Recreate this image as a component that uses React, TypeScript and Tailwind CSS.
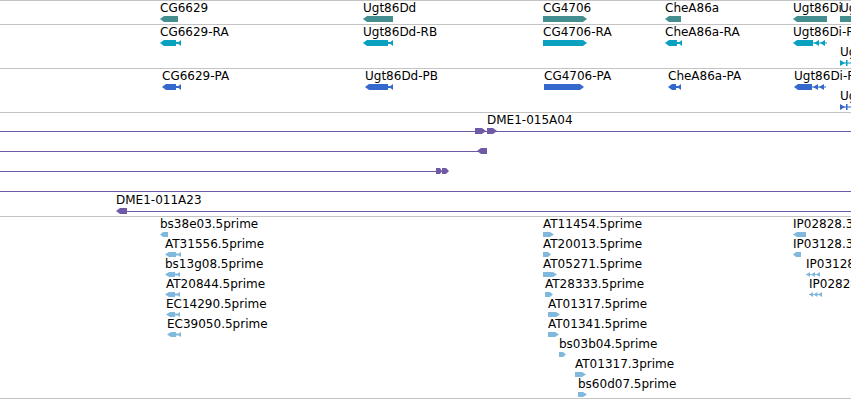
import React from "react";

type Shape = "L" | "R" | "fish" | "chev2" | "rbar" | "rect" | "chevLine" | "chev3";

type G = { x: number; w: number; s: Shape; row?: number };
type Lb = { x: number; t: string; row?: number };

const TEAL = "#438f8f";
const CYAN = "#0aa0c0";
const BLUE = "#3468cc";
const EST = "#80b8de";
const PURPLE = "#6e5aa5";

function tri(xApex: number, xBase: number, h: number) {
  return `${xApex},${h / 2} ${xBase},0 ${xBase},${h}`;
}

function Glyph({ g, color, h }: { g: G; color: string; h: number }) {
  const { w, s } = g;
  const row = g.row ?? 0;
  const a = Math.min(4, Math.round(w * 0.4));
  let body: React.ReactNode = null;
  if (s === "L") {
    body = <polygon points={`0,${h / 2} ${a},0 ${w},0 ${w},${h} ${a},${h}`} />;
  } else if (s === "R") {
    body = <polygon points={`0,0 ${w - a},0 ${w},${h / 2} ${w - a},${h} 0,${h}`} />;
  } else if (s === "rect") {
    body = <rect x={0} y={0} width={w} height={h} />;
  } else if (s === "fish") {
    const bw = w - 5;
    body = (
      <>
        <polygon points={`0,${h / 2} ${a},0 ${bw},0 ${bw},${h} ${a},${h}`} />
        <rect x={bw} y={h / 2 - 1} width={2} height={2} />
        <polygon points={tri(bw + 1, w, h)} />
      </>
    );
  } else if (s === "chev2") {
    const bw = w - 14;
    body = (
      <>
        <polygon points={`0,${h / 2} ${a},0 ${bw},0 ${bw},${h} ${a},${h}`} />
        <rect x={bw} y={h / 2 - 0.5} width={w - bw} height={1} />
        <polygon points={tri(bw + 1, bw + 6, h)} />
        <polygon points={tri(bw + 7, bw + 12, h)} />
      </>
    );
  } else if (s === "rbar") {
    body = (
      <>
        <rect x={0} y={h / 2 - 0.5} width={w} height={1} />
        <polygon points={`0,0 5,${h / 2} 0,${h}`} />
        <rect x={6} y={0} width={1.5} height={h} />
      </>
    );
  } else if (s === "chevLine") {
    body = (
      <>
        <rect x={0} y={h / 2 - 0.5} width={w} height={1} />
        <polygon points={tri(0, 4, h)} />
        <polygon points={tri(w - 9, w - 5, h)} />
        <polygon points={tri(w - 4, w, h)} />
      </>
    );
  } else if (s === "chev3") {
    body = (
      <>
        <rect x={0} y={h / 2 - 0.5} width={w} height={1} />
        <polygon points={tri(0, 4, h)} />
        <polygon points={tri(4.5, 8.5, h)} />
        <polygon points={tri(9, 13, h)} />
      </>
    );
  }
  return (
    <svg
      className="absolute"
      style={{ left: g.x, top: 15 + 20 * row }}
      width={w}
      height={h}
      viewBox={`0 0 ${w} ${h}`}
      fill={color}
    >
      {body}
    </svg>
  );
}

function Label({ l }: { l: Lb }) {
  return (
    <span
      className="absolute whitespace-nowrap text-[12px] leading-[12px] text-black"
      style={{ left: l.x, top: 1 + 20 * (l.row ?? 0) }}
    >
      {l.t}
    </span>
  );
}

function Track({
  className,
  labels,
  glyphs,
  color,
  h,
  children,
}: {
  className: string;
  labels: Lb[];
  glyphs: G[];
  color: string;
  h: number;
  children?: React.ReactNode;
}) {
  return (
    <div className={`relative border-t border-[#c4c4c4] ${className}`}>
      {children}
      {glyphs.map((g, i) => (
        <Glyph key={i} g={g} color={color} h={h} />
      ))}
      {labels.map((l, i) => (
        <Label key={i} l={l} />
      ))}
    </div>
  );
}

const genesL: Lb[] = [
  { x: 160, t: "CG6629" },
  { x: 363, t: "Ugt86Dd" },
  { x: 543, t: "CG4706" },
  { x: 665, t: "CheA86a" },
  { x: 793, t: "Ugt86Di" },
  { x: 840, t: "Ugt86Dh" },
];
const genesG: G[] = [
  { x: 160, w: 18, s: "L" },
  { x: 363, w: 30, s: "L" },
  { x: 543, w: 44, s: "R" },
  { x: 665, w: 16, s: "L" },
  { x: 793, w: 34, s: "L" },
  { x: 840, w: 20, s: "rect" },
];

const raL: Lb[] = [
  { x: 160, t: "CG6629-RA" },
  { x: 363, t: "Ugt86Dd-RB" },
  { x: 543, t: "CG4706-RA" },
  { x: 665, t: "CheA86a-RA" },
  { x: 793, t: "Ugt86Di-RA" },
  { x: 840, t: "Ugt86Dh-RA", row: 1 },
];
const raG: G[] = [
  { x: 160, w: 21, s: "fish" },
  { x: 363, w: 30, s: "fish" },
  { x: 543, w: 44, s: "R" },
  { x: 665, w: 17, s: "fish" },
  { x: 793, w: 34, s: "chev2" },
  { x: 840, w: 20, s: "rbar", row: 1 },
];

const paL: Lb[] = [
  { x: 162, t: "CG6629-PA" },
  { x: 365, t: "Ugt86Dd-PB" },
  { x: 544, t: "CG4706-PA" },
  { x: 668, t: "CheA86a-PA" },
  { x: 794, t: "Ugt86Di-PA" },
  { x: 840, t: "Ugt86Dh-PA", row: 1 },
];
const paG: G[] = [
  { x: 162, w: 19, s: "fish" },
  { x: 365, w: 28, s: "fish" },
  { x: 544, w: 40, s: "R" },
  { x: 668, w: 13, s: "fish" },
  { x: 794, w: 32, s: "chev2" },
  { x: 840, w: 20, s: "rbar", row: 1 },
];

const cloneL: Lb[] = [
  { x: 487, t: "DME1-015A04", row: 0 },
  { x: 116, t: "DME1-011A23", row: 4 },
];
const cloneG: G[] = [
  { x: 475, w: 11, s: "R", row: 0 },
  { x: 487, w: 10, s: "R", row: 0 },
  { x: 477, w: 10, s: "L", row: 1 },
  { x: 436, w: 6, s: "R", row: 2 },
  { x: 442, w: 7, s: "R", row: 2 },
  { x: 116, w: 11, s: "L", row: 4 },
];
const cloneLines = [
  { x: 0, w: 851, row: 0 },
  { x: 0, w: 487, row: 1 },
  { x: 0, w: 446, row: 2 },
  { x: 0, w: 851, row: 3 },
  { x: 120, w: 731, row: 4 },
];

const estL: Lb[] = [
  { x: 160, t: "bs38e03.5prime", row: 0 },
  { x: 165, t: "AT31556.5prime", row: 1 },
  { x: 165, t: "bs13g08.5prime", row: 2 },
  { x: 166, t: "AT20844.5prime", row: 3 },
  { x: 166, t: "EC14290.5prime", row: 4 },
  { x: 167, t: "EC39050.5prime", row: 5 },
  { x: 543, t: "AT11454.5prime", row: 0 },
  { x: 543, t: "AT20013.5prime", row: 1 },
  { x: 543, t: "AT05271.5prime", row: 2 },
  { x: 545, t: "AT28333.5prime", row: 3 },
  { x: 548, t: "AT01317.5prime", row: 4 },
  { x: 548, t: "AT01341.5prime", row: 5 },
  { x: 559, t: "bs03b04.5prime", row: 6 },
  { x: 575, t: "AT01317.3prime", row: 7 },
  { x: 578, t: "bs60d07.5prime", row: 8 },
  { x: 793, t: "IP02828.3prime", row: 0 },
  { x: 793, t: "IP03128.3prime", row: 1 },
  { x: 806, t: "IP03128.5prime", row: 2 },
  { x: 809, t: "IP02828.5prime", row: 3 },
];
const estG: G[] = [
  { x: 160, w: 8, s: "L", row: 0 },
  { x: 165, w: 16, s: "fish", row: 1 },
  { x: 165, w: 15, s: "fish", row: 2 },
  { x: 165, w: 15, s: "fish", row: 3 },
  { x: 166, w: 14, s: "fish", row: 4 },
  { x: 167, w: 14, s: "fish", row: 5 },
  { x: 543, w: 11, s: "R", row: 0 },
  { x: 543, w: 8, s: "R", row: 1 },
  { x: 543, w: 14, s: "R", row: 2 },
  { x: 545, w: 8, s: "R", row: 3 },
  { x: 548, w: 12, s: "R", row: 4 },
  { x: 548, w: 11, s: "R", row: 5 },
  { x: 559, w: 7, s: "R", row: 6 },
  { x: 575, w: 11, s: "R", row: 7 },
  { x: 578, w: 9, s: "R", row: 8 },
  { x: 793, w: 13, s: "L", row: 0 },
  { x: 793, w: 8, s: "L", row: 1 },
  { x: 806, w: 14, s: "chevLine", row: 2 },
  { x: 809, w: 13, s: "chev3", row: 3 },
];

export default function App() {
  return (
    <div className="w-[851px] h-[400px] overflow-hidden bg-white font-['DejaVu_Sans',sans-serif]">
      <Track className="h-[24px]" labels={genesL} glyphs={genesG} color={TEAL} h={6} />
      <Track className="h-[44px]" labels={raL} glyphs={raG} color={CYAN} h={6} />
      <Track className="h-[44px]" labels={paL} glyphs={paG} color={BLUE} h={6} />
      <Track className="h-[104px]" labels={cloneL} glyphs={cloneG} color={PURPLE} h={6}>
        {cloneLines.map((ln, i) => (
          <div
            key={i}
            className="absolute h-px bg-[#6e5aa5]"
            style={{ left: ln.x, width: ln.w, top: 18 + 20 * ln.row }}
          />
        ))}
      </Track>
      <Track className="h-[183px] border-b" labels={estL} glyphs={estG} color={EST} h={5} />
    </div>
  );
}
